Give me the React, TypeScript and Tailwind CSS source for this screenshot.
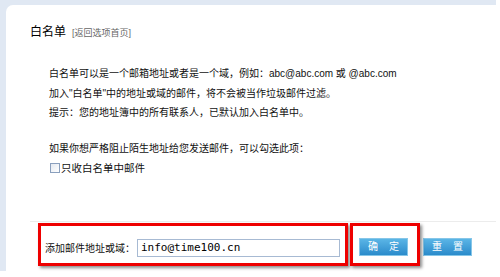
import React from 'react';

const font = { fontFamily: '"Liberation Sans", "Noto Sans CJK SC", sans-serif' };

export default function App() {
  return (
    <div className="w-[500px] h-[277px] bg-white overflow-hidden" style={font}>
      {/* light blue frame */}
      <div className="w-[496px] h-[271px] bg-[#e0e8f3] pt-[5px] pl-[6px]">
        <div className="relative h-full bg-white rounded-tl-[7px] pt-[19px]">
          {/* title */}
          <div className="flex items-baseline gap-[6px] pl-[24px] h-[16px] leading-[16px]">
            <span className="text-[12px] text-black">白名单</span>
            <span className="text-[9px] text-[#666]">[返回选项首页]</span>
          </div>

          {/* description */}
          <div className="mt-[24px] pl-[43px] text-[10px] leading-[19.5px] text-[#111]">
            <p>白名单可以是一个邮箱地址或者是一个域，例如：abc@abc.com 或 @abc.com</p>
            <p>加入"白名单"中的地址或域的邮件，将不会被当作垃圾邮件过滤。</p>
            <p>提示：您的地址簿中的所有联系人，已默认加入白名单中。</p>
            <p className="mt-[16.5px]">如果你想严格阻止陌生地址给您发送邮件，可以勾选此项：</p>
            <label className="flex items-center">
              <span className="ml-[1px] w-[10px] h-[10px] border border-[#8a9fbd] bg-gradient-to-br from-[#e4e9f0] to-white" />
              <span className="ml-[1px] text-[10.5px]">只收白名单中邮件</span>
            </label>
          </div>

          {/* separator */}
          <div className="mt-[43px] ml-[24px] h-px bg-[#ececec]" />

          {/* add form */}
          <div className="flex items-center pl-[39px] pt-[17px]">
            <span className="text-[10px] text-[#111] w-[92px]">添加邮件地址或域：</span>
            <div className="w-[203px] h-[18px] border border-[#a7bad3] flex items-center pl-[3px]">
              <span className="text-[11px] text-black" style={{ fontFamily: '"DejaVu Sans Mono", monospace' }}>
                info@time100.cn
              </span>
            </div>
            <button className="ml-[19px] -mt-[2px] w-[49px] h-[18px] border border-[#86c6e8] bg-gradient-to-b from-[#5ab5e6] to-[#2a8bcb] text-white text-[10px] tracking-[4px] pl-[4px] leading-none">
              确 定
            </button>
            <button className="ml-[15px] -mt-[2px] w-[49px] h-[18px] border border-[#86c6e8] bg-gradient-to-b from-[#5ab5e6] to-[#2a8bcb] text-white text-[10px] tracking-[4px] pl-[4px] leading-none">
              重 置
            </button>
          </div>

          {/* red annotation boxes */}
          <div className="absolute left-[32px] top-[218px] w-[310px] h-[43px] border-[3px] border-[#ee0000] shadow-[2px_2px_3px_rgba(0,0,0,0.45)]" />
          <div className="absolute left-[344px] top-[218px] w-[70px] h-[43px] border-[3px] border-[#ee0000] shadow-[2px_2px_3px_rgba(0,0,0,0.45)]" />
        </div>
      </div>
    </div>
  );
}
